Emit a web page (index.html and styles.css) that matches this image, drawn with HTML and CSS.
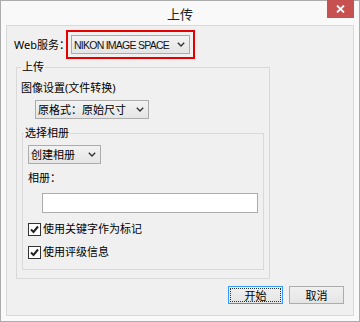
FILE: index.html
```html
<!DOCTYPE html>
<html>
<head>
  <meta charset="UTF-8">
  <title>上传</title>
  <link rel="stylesheet" href="styles.css">
</head>
<body>
  <div class="window">
    <div class="titlebar">上传</div>
    <button class="close-btn">
      <svg width="9" height="8" viewBox="0 0 9 8"><path d="M1 0.5 L8 7.5 M8 0.5 L1 7.5" stroke="#fff" stroke-width="1.8" fill="none"/></svg>
    </button>

    <div class="client">
      <div class="service-row">
        <span class="label">Web服务：</span>
        <div class="highlight">
          <div class="combo combo-service">
            <span>NIKON IMAGE SPACE</span>
            <svg class="chevron" width="8" height="5" viewBox="0 0 8 5"><polyline points="0.8,0.8 4,4 7.2,0.8" stroke="#333" stroke-width="1.4" fill="none"/></svg>
          </div>
        </div>
      </div>

      <fieldset class="group group-upload">
        <legend>上传</legend>
        <div class="caption">图像设置(文件转换)</div>
        <div class="combo combo-format">
          <span>原格式：原始尺寸</span>
          <svg class="chevron" width="8" height="5" viewBox="0 0 8 5"><polyline points="0.8,0.8 4,4 7.2,0.8" stroke="#333" stroke-width="1.4" fill="none"/></svg>
        </div>

        <fieldset class="group group-album">
          <legend>选择相册</legend>
          <div class="combo combo-album">
            <span>创建相册</span>
            <svg class="chevron" width="8" height="5" viewBox="0 0 8 5"><polyline points="0.8,0.8 4,4 7.2,0.8" stroke="#333" stroke-width="1.4" fill="none"/></svg>
          </div>
          <div class="caption caption-album">相册：</div>
          <div class="textbox"></div>
          <label class="check check-first">
            <span class="box"><svg width="11" height="11" viewBox="0 0 11 11"><polyline points="2,5.5 4.5,8 9,2.5" stroke="#222" stroke-width="2" fill="none"/></svg></span>
            使用关键字作为标记
          </label>
          <label class="check">
            <span class="box"><svg width="11" height="11" viewBox="0 0 11 11"><polyline points="2,5.5 4.5,8 9,2.5" stroke="#222" stroke-width="2" fill="none"/></svg></span>
            使用评级信息
          </label>
        </fieldset>
      </fieldset>

      <div class="buttons">
        <button class="btn btn-default"><span class="focus">开始</span></button>
        <button class="btn">取消</button>
      </div>
    </div>
  </div>
</body>
</html>
```

FILE: styles.css
```css
body {
  margin: 0;
  font-family: "Noto Sans", "Noto Sans CJK SC", sans-serif;
  font-size: 11px;
  color: #000;
}

.window {
  position: relative;
  width: 360px;
  height: 322px;
  box-sizing: border-box;
  border: 1px solid #acacac;
  background-color: #f9f9f9;
  display: flex;
  flex-direction: column;
}

.titlebar {
  height: 24px;
  display: flex;
  justify-content: center;
  align-items: center;
  font-family: "Noto Sans CJK SC", sans-serif;
  font-size: 13px;
  color: #222;
}

.close-btn {
  position: absolute;
  top: -1px;
  right: 5px;
  width: 27px;
  height: 18px;
  padding: 0;
  border: none;
  background-color: #c75050;
  display: flex;
  justify-content: center;
  align-items: center;
}

.client {
  margin: 0 5px;
  height: 291px;
  box-sizing: border-box;
  border: 1px solid #d9d9d9;
  background-color: #f0f0f0;
  display: flex;
  flex-direction: column;
  align-items: flex-start;
}

.service-row {
  display: flex;
  align-items: center;
  padding: 4px 0 0 7px;
}

.label {
  width: 52px;
  line-height: 16px;
  white-space: nowrap;
}

.highlight {
  border: 2px solid #e60000;
  padding: 3px;
}

.combo {
  box-sizing: border-box;
  height: 19px;
  border: 1px solid #acacac;
  background: linear-gradient(#f2f2f2, #e5e5e5);
  display: flex;
  align-items: center;
  justify-content: space-between;
  padding: 0 4px 0 2px;
  line-height: 16px;
  white-space: nowrap;
}

.combo-service {
  width: 119px;
  font-family: "Liberation Sans", sans-serif;
  font-size: 10.5px;
  letter-spacing: -0.75px;
  color: #111;
}

.combo-format {
  width: 114px;
  margin: 4px 0 0 14px;
}

.combo-album {
  width: 73px;
  margin-top: 4px;
}

.group {
  box-sizing: border-box;
  margin: 0;
  border: 1px solid #d9d9d9;
  display: flex;
  flex-direction: column;
  align-items: flex-start;
}

.group legend {
  padding: 0 1px;
  line-height: 16px;
}

.group-upload {
  width: 253px;
  margin: 0 0 0 9px;
  padding: 5px 5px 8px 4px;
}

.group-album {
  width: 241px;
  margin: 6px 0 0 1px;
  padding: 0 5px 9px 5px;
}

.group-album legend {
  margin-left: -4px;
}

.caption {
  line-height: 16px;
}

.caption-album {
  margin-top: 6px;
}

.textbox {
  width: 216px;
  height: 20px;
  box-sizing: border-box;
  margin: 7px 0 0 14px;
  border: 1px solid #acacac;
  background-color: white;
}

.check {
  display: flex;
  align-items: center;
  gap: 2px;
  line-height: 16px;
  margin-top: 7px;
}

.check-first {
  margin-top: 8px;
}

.check .box {
  width: 13px;
  height: 13px;
  box-sizing: border-box;
  border: 1px solid #333;
  background-color: white;
  display: flex;
  justify-content: center;
  align-items: center;
}

.buttons {
  align-self: flex-end;
  display: flex;
  gap: 6px;
  margin: 7px 9px 0 0;
}

.btn {
  width: 55px;
  height: 18px;
  box-sizing: border-box;
  padding: 0;
  border: 1px solid #acacac;
  background: linear-gradient(#f0f0f0, #e5e5e5);
  font-family: "Noto Sans CJK SC", sans-serif;
  font-size: 11px;
  color: #000;
  display: flex;
  justify-content: center;
  align-items: center;
}

.btn-default {
  border-color: #3399ff;
  padding: 1px;
}

.btn-default .focus {
  width: 100%;
  height: 100%;
  box-sizing: border-box;
  border: 1px dotted #333;
  display: flex;
  justify-content: center;
  align-items: center;
}
```
